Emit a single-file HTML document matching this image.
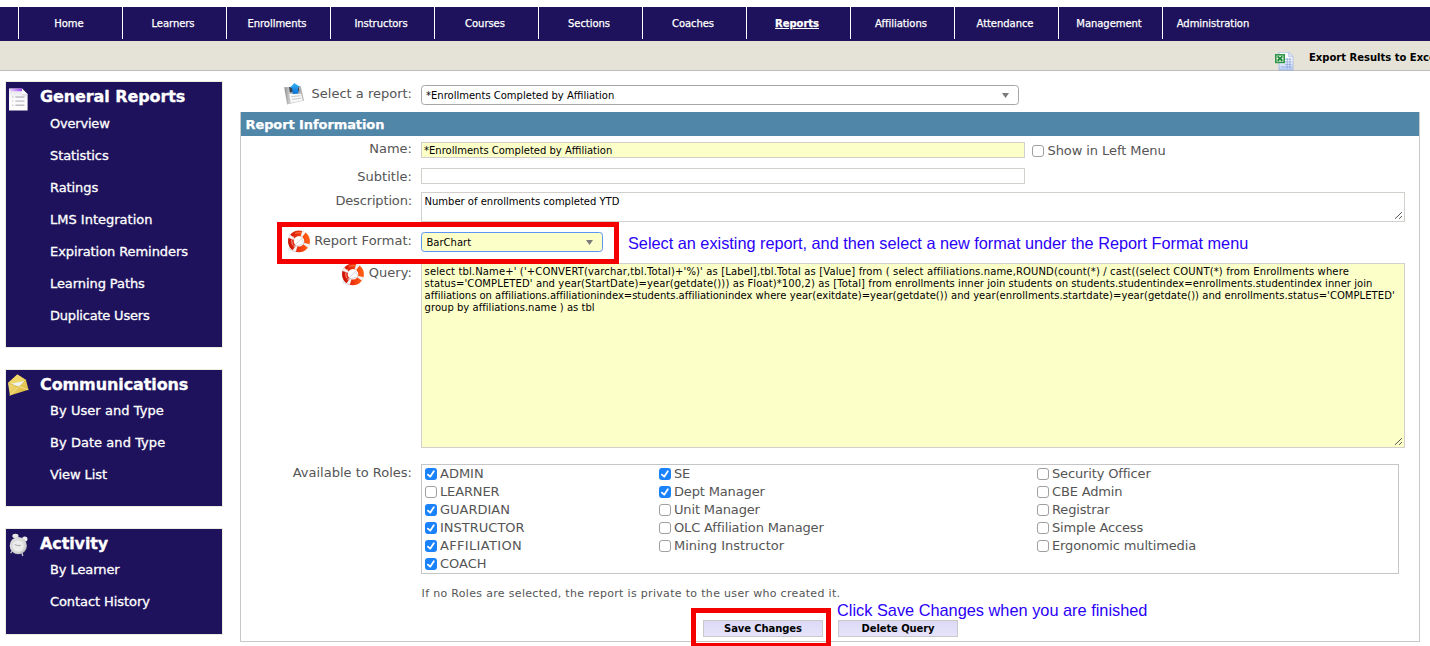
<!DOCTYPE html>
<html lang="en">
<head>
<meta charset="utf-8">
<title>Reports</title>
<style>
html,body{margin:0;padding:0;}
body{width:1430px;height:646px;overflow:hidden;background:#fff;position:relative;
  font-family:"DejaVu Sans","Liberation Sans",sans-serif;font-size:13px;color:#555;}
*{box-sizing:border-box;}
/* top nav */
#nav{position:absolute;left:0;top:7px;width:1430px;height:34px;background:#1e125c;}
#nav ul{list-style:none;margin:0;padding:0;position:absolute;left:18px;top:0;display:flex;}
#nav li{width:104px;height:32px;border-left:1px solid #fff;text-align:center;line-height:33px;
  color:#fff;font-size:10px;letter-spacing:-0.05px;padding-right:3px;white-space:nowrap;-webkit-text-stroke:0.25px #fff;}
#nav li.cur{font-weight:bold;text-decoration:underline;}
#sub{position:absolute;left:0;top:41px;width:1430px;height:30px;background:#e5e2d8;border-bottom:1px solid #bdbdbd;}
#sub .exp{position:absolute;left:1309px;top:10px;font-size:10px;line-height:14px;font-weight:bold;color:#000;white-space:nowrap;}
#sub svg{position:absolute;left:1274px;top:11px;}
/* sidebar */
.side{position:absolute;left:6px;width:216px;background:#1e125c;outline:1px solid #eeebe2;color:#fff;}
.side h2{-webkit-text-stroke:0.3px #fff;margin:0;position:absolute;left:34px;top:5px;font-size:16px;line-height:19px;font-weight:bold;white-space:nowrap;letter-spacing:-0.1px;}
.side ul{list-style:none;margin:0;padding:0;position:absolute;left:44px;top:32px;}
.side li{-webkit-text-stroke:0.3px #fff;height:32px;font-size:13px;line-height:18px;white-space:nowrap;letter-spacing:-0.08px;}
.side svg{position:absolute;}
/* main */
#main{position:absolute;left:240px;top:112px;width:1180px;height:530px;border:1px solid #c8c8c8;border-top:none;}
#hdr{position:absolute;left:0;top:0;width:1178px;height:24px;background:#5086a8;color:#fff;font-weight:bold;font-size:13px;-webkit-text-stroke:0.25px #fff;
  line-height:25px;padding-left:4.5px;letter-spacing:-0.09px;}
.lbl{position:absolute;text-align:right;font-size:13px;line-height:16px;color:#555;white-space:nowrap;}
.inp{position:absolute;border:1px solid #d3d0cc;background:#fff;font-size:10px;color:#000;padding:0 3px;white-space:nowrap;}
.yel{background:#fdffc9;}
.note{position:absolute;font-family:"Liberation Sans",sans-serif;color:#2b00f7;font-size:16.28px;line-height:19px;white-space:nowrap;}
.red{position:absolute;border:5px solid #f50000;}
.btn{position:absolute;top:620px;width:120px;height:17px;background:linear-gradient(#dcd9f6,#e6e4fa);border:1px solid #c9c9c9;font-weight:bold;font-size:10px;
 color:#000;text-align:center;line-height:15px;letter-spacing:-0.1px;}
.sel{border-radius:3.5px;border:1px solid #a6a6a6;}
.arrow{position:absolute;right:9px;top:7px;width:7px;height:5px;background:#7b7b7b;clip-path:polygon(0 0,100% 0,50% 100%);}
.grip{position:absolute;right:1px;bottom:1px;}
#roles{position:absolute;left:421px;top:464px;width:978px;height:110px;border:1px solid #c6c6c6;}
#roles .col{position:absolute;top:0;}
#roles .lc .r{letter-spacing:-0.15px;}
#roles .r{height:18px;line-height:18px;font-size:13px;color:#555;white-space:nowrap;position:relative;padding-left:18px;}
.cb{position:absolute;left:3px;top:3px;width:12px;height:12px;border:1px solid #a0a0a0;border-radius:3px;background:#fff;}
.cb.on{background:#1a82fb;border-color:#1a82fb;}
.cb.on{border:none;}
.cb svg{position:absolute;left:0;top:0;}
</style>
</head>
<body>
<div id="nav">
 <ul>
  <li>Home</li><li>Learners</li><li>Enrollments</li><li>Instructors</li><li>Courses</li><li>Sections</li><li>Coaches</li>
  <li class="cur">Reports</li><li>Affiliations</li><li>Attendance</li><li>Management</li><li>Administration</li>
 </ul>
</div>
<div id="sub">
<svg width="20" height="19" viewBox="0 0 20 19">
 <defs><linearGradient id="gxd" x1="0" x2="0" y1="0" y2="1"><stop offset="0" stop-color="#ffffff"/><stop offset="0.45" stop-color="#f4f7fd"/><stop offset="1" stop-color="#b9cdf2"/></linearGradient></defs>
 <path d="M5 0.3H14.5L19 4.6V18H5Z" fill="url(#gxd)" stroke="#8fa8dc" stroke-width=".6"/>
 <path d="M14.5 0.3V4.6H19Z" fill="#dfe8fa" stroke="#9fb4e0" stroke-width=".5"/>
 <path d="M11 7.2H17.5M11 9.8H17.5M11 12.4H17.5M7 15H17.5M13.2 6V16.6M16 6V16.6" stroke="#7f9bd6" stroke-width=".8" fill="none" opacity=".8"/>
 <rect x="1" y="2" width="10" height="9.2" fill="#2f9547"/>
 <rect x="2.6" y="3.6" width="6.8" height="6" fill="#e9f5ea"/>
 <path d="M3.6 4.4L8.4 8.8M8.4 4.4L3.6 8.8" stroke="#1e8a3a" stroke-width="1.9"/>
</svg>
 <span class="exp">Export Results to Excel</span>
</div>

<div class="side" style="top:82px;height:265px;">
 <h2>General Reports</h2>
 <ul style="top:33px"><li style="letter-spacing:-0.2px">Overview</li><li>Statistics</li><li>Ratings</li><li style="letter-spacing:0px">LMS Integration</li><li>Expiration Reminders</li><li>Learning Paths</li><li style="letter-spacing:-0.2px">Duplicate Users</li></ul>
</div>
<div class="side" style="top:370px;height:136px;">
 <h2>Communications</h2>
 <ul><li style="letter-spacing:0.05px">By User and Type</li><li style="letter-spacing:0.05px">By Date and Type</li><li>View List</li></ul>
</div>
<div class="side" style="top:529px;height:105px;">
 <h2>Activity</h2>
 <ul><li>By Learner</li><li>Contact History</li></ul>
</div>

<div class="lbl" style="left:262px;width:150px;top:86px;">Select a report:</div>
<div class="inp sel" style="left:421px;top:85px;width:598px;height:20px;line-height:19px;padding-left:4px;">*Enrollments Completed by Affiliation<i class="arrow"></i></div>

<div id="main"><div id="hdr">Report Information</div></div>

<div class="lbl" style="left:262px;width:150px;top:141px;letter-spacing:0px;">Name:</div>
<div class="inp yel" style="left:421px;top:142px;width:604px;height:16px;line-height:15px;padding-left:2px;">*Enrollments Completed by Affiliation</div>
<div class="cb" style="left:1032px;top:145px;"></div>
<div class="lbl" style="left:1047.5px;top:143px;text-align:left;letter-spacing:-0.08px;">Show in Left Menu</div>

<div class="lbl" style="left:262px;width:150px;top:169px;letter-spacing:0.02px;">Subtitle:</div>
<div class="inp" style="left:421px;top:168px;width:604px;height:16px;"></div>

<div class="lbl" style="left:262px;width:150px;top:193px;letter-spacing:-0.15px;">Description:</div>
<div class="inp" style="left:421px;top:192px;width:984px;height:30px;line-height:16px;padding-top:1px;padding-left:2.5px;">Number of enrollments completed YTD<svg class="grip" width="9" height="9" viewBox="0 0 9 9"><path d="M7.9 1.2L1 7.8M7.9 5.1L5.1 7.8" stroke="#555" stroke-width="1" fill="none"/></svg></div>

<div class="lbl" style="left:262px;width:150px;top:233px;letter-spacing:0.03px;">Report Format:</div>
<div class="inp sel yel" style="left:421px;top:232px;width:182px;height:20px;line-height:19px;padding-left:4.5px;border-color:#5b96f5;">BarChart<i class="arrow"></i></div>
<div class="note" style="left:628px;top:234px;">Select an existing report, and then select a new format under the Report Format menu</div>

<div class="lbl" style="left:262px;width:150px;top:265px;letter-spacing:0.05px;">Query:</div>
<div class="inp yel" style="left:421px;top:263px;width:984px;height:185px;line-height:12px;padding-top:2px;padding-left:2.6px;"><span style="letter-spacing:0.13px">select tbl.Name+' ('+CONVERT(varchar,tbl.Total)+'%)' as [Label],tbl.Total as [Value] from ( select affiliations.name,ROUND(count(*) / cast((select COUNT(*) from Enrollments where</span><br><span style="letter-spacing:0.107px">status='COMPLETED' and year(StartDate)=year(getdate())) as Float)*100,2) as [Total] </span><span style="letter-spacing:0.039px">from enrollments inner join students on students.studentindex=enrollments.studentindex inner join</span><br><span style="letter-spacing:-0.021px">affiliations on affiliations.affiliationindex=students.affiliationindex </span><span style="letter-spacing:0.049px">where year(exitdate)=year(getdate()) and year(enrollments.startdate)=year(getdate()) and enrollments.status='COMPLETED'</span><br><span style="letter-spacing:0.03px">group by affiliations.name ) as tbl</span><svg class="grip" width="9" height="9" viewBox="0 0 9 9"><path d="M7.9 1.2L1 7.8M7.9 5.1L5.1 7.8" stroke="#555" stroke-width="1" fill="none"/></svg></div>


<!-- icons -->
<svg style="position:absolute;left:9px;top:88px" width="19" height="23" viewBox="0 0 19 23">
 <defs>
  <linearGradient id="gpur" x1="0" x2="1" y1="0" y2="0"><stop offset="0" stop-color="#ecd2ff"/><stop offset="1" stop-color="#a548f2"/></linearGradient>
  <linearGradient id="gdoc" x1="0" x2="0" y1="0" y2="1"><stop offset="0" stop-color="#e4e4ea"/><stop offset="0.5" stop-color="#fbfbfd"/><stop offset="1" stop-color="#ffffff"/></linearGradient>
 </defs>
 <path d="M0 0.5H13L18.6 6.2V22.5H0Z" fill="url(#gdoc)"/>
 <rect x="0.6" y="0.6" width="12.4" height="2.6" fill="url(#gpur)"/>
 <path d="M13 0.5V6.2H18.6Z" fill="#fff"/>
 <path d="M13 6.2H18.6L17.5 7.4H14Z" fill="#c9c9d2" opacity=".7"/>
 <g stroke="#bdbdc4" stroke-width="1.4"><path d="M6.4 9H15.4M6.4 13.1H15.4M6.4 17.2H15.4"/><path d="M3.2 9H4.4M3.2 13.1H4.4M3.2 17.2H4.4" stroke="#c9c9d0"/></g>
</svg>

<svg style="position:absolute;left:7px;top:373px" width="23" height="24" viewBox="0 0 23 24">
 <defs>
  <linearGradient id="genv" x1="0" x2="1" y1="0" y2="1"><stop offset="0" stop-color="#f7e88f"/><stop offset="1" stop-color="#d9b132"/></linearGradient>
 </defs>
 <path d="M1 10L10.3 1.6L19 6.9L21.5 16.8L2.9 22.6Z" fill="url(#genv)"/>
 <path d="M1 10L10.3 1.6L19 6.9L12 11.5Z" fill="#efd668"/>
 <path d="M4 10.7L17.3 7.9L15.4 10.8L12 13.5L8.4 12.4Z" fill="#eaf2f5"/>
 <path d="M1 10L11.5 14.2L19 6.9" fill="none" stroke="#c9a52c" stroke-width=".7" opacity=".7"/>
 <path d="M2.9 22.6L11 14.2M21.5 16.8L12.2 13.6" fill="none" stroke="#f6e690" stroke-width=".8"/>
</svg>

<svg style="position:absolute;left:8px;top:532px" width="24" height="26" viewBox="0 0 24 26">
 <defs>
  <radialGradient id="gclk" cx="0.45" cy="0.45" r="0.6"><stop offset="0" stop-color="#efefef"/><stop offset="0.7" stop-color="#d9d9d9"/><stop offset="1" stop-color="#b0b0b0"/></radialGradient>
 </defs>
 <path d="M4.5 18.5L2.6 21.2M14 21L14.8 24" stroke="#c8c8c8" stroke-width="1.3" fill="none"/>
 <ellipse cx="7.4" cy="3.9" rx="3.1" ry="2.1" fill="#e6e6e6"/>
 <ellipse cx="16.8" cy="6.9" rx="2.7" ry="2.5" fill="#f0f0f0"/>
 <circle cx="10.3" cy="13.7" r="8.6" fill="url(#gclk)"/>
 <circle cx="10.1" cy="14" r="6" fill="#ececec" stroke="#cfcfcf" stroke-width=".6"/>
 <path d="M10.3 13.7L6.8 12.6M10.3 13.7L12.8 13.2" stroke="#9a9a9a" stroke-width=".9" fill="none"/>
</svg>

<svg style="position:absolute;left:282px;top:81px" width="24" height="26" viewBox="0 0 24 26">
 <defs>
  <linearGradient id="gflp" x1="0" x2="1" y1="0" y2="0"><stop offset="0" stop-color="#8a8a8a"/><stop offset="0.25" stop-color="#c9c9c9"/><stop offset="1" stop-color="#a9a9a9"/></linearGradient>
  <linearGradient id="garr" x1="0" x2="0" y1="0" y2="1"><stop offset="0" stop-color="#35b4f5"/><stop offset="1" stop-color="#0a6fd8"/></linearGradient>
 </defs>
 <path d="M2.2 6.2L18.8 5.2L21.9 19.6L5.1 23.6Z" fill="url(#gflp)"/>
 <path d="M7 6L16.5 5.4L17.4 10.2L7.9 11.4Z" fill="#3a3f48"/>
 <path d="M7.2 13.1L19.3 12.8L20.9 19.6L8.8 21.9Z" fill="#f7f7f7"/>
 <path d="M9.3 15.6L18.6 14.7M9.9 18.4L19.2 17.2" stroke="#c4c4c4" stroke-width=".9" fill="none"/>
 <path d="M12.2 2L18.3 6L15.9 6.3L16.4 12.4L10.6 12.9L10.1 7L7.7 7.2Z" fill="url(#garr)"/>
</svg>
<svg width="0" height="0" style="position:absolute"><defs><linearGradient id="gbuoy" x1="0" x2="1" y1="0" y2="0"><stop offset="0" stop-color="#d81a08"/><stop offset="0.5" stop-color="#f0340e"/><stop offset="1" stop-color="#ff5a14"/></linearGradient></defs></svg>
<svg style="position:absolute;left:287px;top:230px" width="24" height="23" viewBox="0 0 24 23">
 <ellipse cx="7" cy="19.2" rx="6" ry="2.6" fill="#d9d9d9" opacity=".55"/>
 <circle cx="12" cy="11.3" r="8.1" fill="none" stroke="url(#gbuoy)" stroke-width="5.6"/>
 <path d="M3.6 5.6A10.2 10.2 0 0 0 5.2 19" fill="none" stroke="#b80e00" stroke-width="1.4" opacity=".55"/>
 <path d="M6.6 6.4A7 7 0 0 0 6.2 15.4" fill="none" stroke="#ffd8cc" stroke-width="1" opacity=".7"/>
 <path d="M8 3.6A8.6 8.6 0 0 1 15 3.2" fill="none" stroke="#ff8a5c" stroke-width="1.2" opacity=".6"/>
 <circle cx="12" cy="11.3" r="8.1" fill="none" stroke="#f3f3f3" stroke-width="5.8" stroke-dasharray="2.7 10.02" stroke-dashoffset="-2.3"/>
 <path d="M6.9 16.4L14.6 8.2L17.2 13.8Z" fill="none" stroke="#cdcdcd" stroke-width=".8"/>
</svg>
<svg style="position:absolute;left:341px;top:262.5px" width="24" height="23" viewBox="0 0 24 23">
 <ellipse cx="7" cy="19.2" rx="6" ry="2.6" fill="#d9d9d9" opacity=".55"/>
 <circle cx="12" cy="11.3" r="8.1" fill="none" stroke="url(#gbuoy)" stroke-width="5.6"/>
 <path d="M3.6 5.6A10.2 10.2 0 0 0 5.2 19" fill="none" stroke="#b80e00" stroke-width="1.4" opacity=".55"/>
 <path d="M6.6 6.4A7 7 0 0 0 6.2 15.4" fill="none" stroke="#ffd8cc" stroke-width="1" opacity=".7"/>
 <path d="M8 3.6A8.6 8.6 0 0 1 15 3.2" fill="none" stroke="#ff8a5c" stroke-width="1.2" opacity=".6"/>
 <circle cx="12" cy="11.3" r="8.1" fill="none" stroke="#f3f3f3" stroke-width="5.8" stroke-dasharray="2.7 10.02" stroke-dashoffset="-2.3"/>
 <path d="M6.9 16.4L14.6 8.2L17.2 13.8Z" fill="none" stroke="#cdcdcd" stroke-width=".8"/>
</svg>
<div class="red" style="left:277px;top:222px;width:342px;height:42px;"></div>

<div class="lbl" style="left:262px;width:150px;top:465px;">Available to Roles:</div>
<div id="roles">
 <div class="col" style="left:0;">
  <div class="r"><i class="cb on"><svg width="12" height="12" viewBox="0 0 12 12"><path d="M2.9 6.6L5.2 8.7L8.8 3.2" fill="none" stroke="#fff" stroke-width="1.8" stroke-linecap="round" stroke-linejoin="round"/></svg></i>ADMIN</div>
  <div class="r" style="letter-spacing:-0.14px"><i class="cb"></i>LEARNER</div>
  <div class="r"><i class="cb on"><svg width="12" height="12" viewBox="0 0 12 12"><path d="M2.9 6.6L5.2 8.7L8.8 3.2" fill="none" stroke="#fff" stroke-width="1.8" stroke-linecap="round" stroke-linejoin="round"/></svg></i>GUARDIAN</div>
  <div class="r"><i class="cb on"><svg width="12" height="12" viewBox="0 0 12 12"><path d="M2.9 6.6L5.2 8.7L8.8 3.2" fill="none" stroke="#fff" stroke-width="1.8" stroke-linecap="round" stroke-linejoin="round"/></svg></i>INSTRUCTOR</div>
  <div class="r" style="letter-spacing:0.33px"><i class="cb on"><svg width="12" height="12" viewBox="0 0 12 12"><path d="M2.9 6.6L5.2 8.7L8.8 3.2" fill="none" stroke="#fff" stroke-width="1.8" stroke-linecap="round" stroke-linejoin="round"/></svg></i>AFFILIATION</div>
  <div class="r"><i class="cb on"><svg width="12" height="12" viewBox="0 0 12 12"><path d="M2.9 6.6L5.2 8.7L8.8 3.2" fill="none" stroke="#fff" stroke-width="1.8" stroke-linecap="round" stroke-linejoin="round"/></svg></i>COACH</div>
 </div>
 <div class="col lc" style="left:234px;">
  <div class="r"><i class="cb on"><svg width="12" height="12" viewBox="0 0 12 12"><path d="M2.9 6.6L5.2 8.7L8.8 3.2" fill="none" stroke="#fff" stroke-width="1.8" stroke-linecap="round" stroke-linejoin="round"/></svg></i>SE</div>
  <div class="r"><i class="cb on"><svg width="12" height="12" viewBox="0 0 12 12"><path d="M2.9 6.6L5.2 8.7L8.8 3.2" fill="none" stroke="#fff" stroke-width="1.8" stroke-linecap="round" stroke-linejoin="round"/></svg></i>Dept Manager</div>
  <div class="r"><i class="cb"></i>Unit Manager</div>
  <div class="r"><i class="cb"></i>OLC Affiliation Manager</div>
  <div class="r" style="letter-spacing:-0.02px"><i class="cb"></i>Mining Instructor</div>
 </div>
 <div class="col lc" style="left:612px;">
  <div class="r"><i class="cb"></i>Security Officer</div>
  <div class="r"><i class="cb"></i>CBE Admin</div>
  <div class="r"><i class="cb"></i>Registrar</div>
  <div class="r"><i class="cb"></i>Simple Access</div>
  <div class="r"><i class="cb"></i>Ergonomic multimedia</div>
 </div>
</div>
<div class="lbl" style="left:421.6px;top:586px;text-align:left;font-size:11px;letter-spacing:0.32px;">If no Roles are selected, the report is private to the user who created it.</div>

<div class="btn" style="left:703px;">Save Changes</div>
<div class="btn" style="left:838px;">Delete Query</div>
<div class="note" style="left:837px;top:601px;font-size:16.33px;">Click Save Changes when you are finished</div>
<div class="red" style="left:691px;top:608px;width:140px;height:40px;"></div>
</body>
</html>
